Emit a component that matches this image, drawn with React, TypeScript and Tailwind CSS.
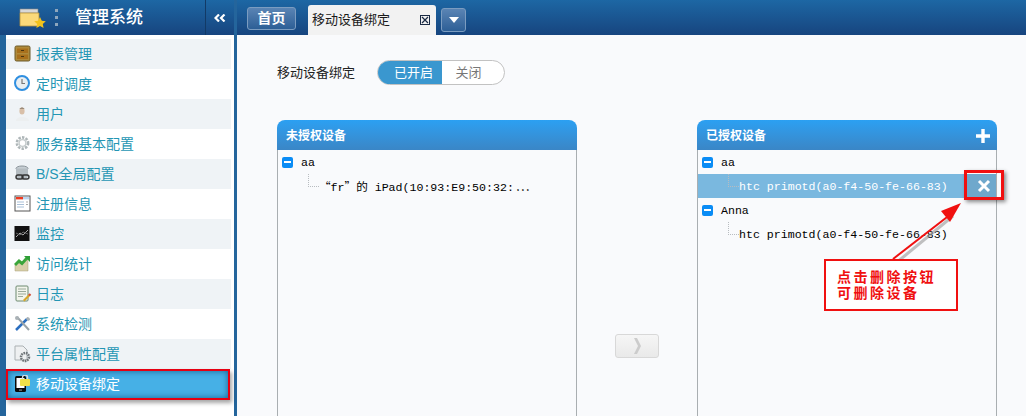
const cjk = "font-['Liberation_Sans','Noto_Sans_CJK_SC',sans-serif]";
const mono = "font-['Liberation_Mono','Noto_Sans_CJK_SC',monospace]";
const wide = "font-['Noto_Sans_CJK_SC',sans-serif]";

const Ic = ({ children }: { children: React.ReactNode }) => (
  <svg width="18" height="18" viewBox="0 0 18 18" className="shrink-0">{children}</svg>
);

const icons: React.ReactNode[] = [
  <Ic><rect x="1" y="1" width="15" height="15" rx="1.500" fill="#b08a3a" stroke="#6b5a2a" /><rect x="3" y="3.500" width="11" height="4.500" fill="#a8701c" /><rect x="3" y="9.500" width="11" height="4.500" fill="#a8701c" /><rect x="7" y="5" width="3" height="1" fill="#4a3510" /><rect x="7" y="11" width="3" height="1" fill="#4a3510" /></Ic>,
  <Ic><circle cx="8" cy="8" r="7" fill="#e8eef2" stroke="#2f8fe0" strokeWidth="2" /><path d="M8 4v4.500h3" stroke="#777" strokeWidth="1.200" fill="none" /></Ic>,
  <Ic><path d="M2 16c0-3 3-4 6-4s7 1 7 4z" fill="#eceff0" /><ellipse cx="8" cy="6" rx="2.600" ry="3.600" fill="#d8bfa8" /><path d="M5.500 4c1-2 4-2 5 0z" fill="#9a8a78" /></Ic>,
  <Ic><circle cx="8.500" cy="8" r="5.600" fill="none" stroke="#aeb6b8" strokeWidth="2.600" strokeDasharray="2.400 1.200" /><circle cx="8.500" cy="8" r="3.400" fill="none" stroke="#c5cbcc" strokeWidth="1.400" /></Ic>,
  <Ic><ellipse cx="8" cy="3.500" rx="6" ry="2.500" fill="#c6ced3" stroke="#8b949a" /><rect x="2" y="3.500" width="12" height="8" fill="#b4bcc1" /><ellipse cx="8" cy="11.500" rx="6" ry="2.500" fill="#b4bcc1" /><rect x="2" y="10" width="7" height="4" rx="2" fill="none" stroke="#333" strokeWidth="1.400" /><rect x="8" y="10" width="7" height="4" rx="2" fill="none" stroke="#333" strokeWidth="1.400" /></Ic>,
  <Ic><rect x="1" y="1" width="15" height="15" fill="#fff" stroke="#555" /><rect x="2" y="2" width="7" height="2.400" fill="#ee3a20" /><rect x="9" y="2" width="6" height="2.400" fill="#bcd4ee" /><path d="M3 7h7M3 9.500h7M3 12h7" stroke="#a9c0d8" /><path d="M12 7h2M12 9.500h2" stroke="#aaa" /></Ic>,
  <Ic><rect x="0.500" y="1" width="15" height="15" fill="#111" /><path d="M2 12l4-4 3 2 5-5" stroke="#aaa" strokeWidth="1" fill="none" /><path d="M2 8l4 2 3-3 5 2" stroke="#666" strokeWidth="1" fill="none" /></Ic>,
  <Ic><path d="M1 10l4-3 3 2 6-6v13H1z" fill="#d8cfa8" stroke="#a89f78" strokeWidth=".5" /><path d="M1 10l4-4 3 2.500 5-5.500" stroke="#3aa53a" strokeWidth="3" fill="none" /><path d="M10 1h6v6z" fill="#2f9e36" /></Ic>,
  <Ic><rect x="2" y="1" width="12" height="15" rx="1" fill="#f2f5ec" stroke="#6d8a70" /><path d="M4 4h8M4 6.500h8M4 9h8M4 11.500h5" stroke="#9aaa9a" /><path d="M9 15l6-6 1.500 1.500-6 6z" fill="#d8a72a" /><path d="M15 9l1.500 1.500" stroke="#d24a3a" strokeWidth="2" /></Ic>,
  <Ic><path d="M2 15l11-11" stroke="#2c6fc0" strokeWidth="2.500" /><path d="M13 2a3 3 0 0 1 3 3l-2 1-2-2z" fill="#aab2b6" /><path d="M3 2l12 13" stroke="#9aa3a8" strokeWidth="2" /><circle cx="3" cy="3" r="2" fill="#aab2b6" /></Ic>,
  <Ic><path d="M1 1h8l4 4v10H1z" fill="#eef0f1" stroke="#aab0b3" /><circle cx="11" cy="12" r="4" fill="none" stroke="#6e7478" strokeWidth="2.500" strokeDasharray="1.600 .8" /></Ic>,
  <Ic><rect x="1" y="1" width="11" height="16" rx="1.500" fill="#0b0b0b" /><rect x="2.500" y="3" width="8" height="10" fill="#fff" /><rect x="5" y="14.500" width="3" height="1.200" fill="#888" /><rect x="6" y="4" width="10" height="7" rx="1" fill="#efe04a" /><path d="M8.500 4V2.500a2.500 2.500 0 0 1 5 0V4" stroke="#d8dce0" strokeWidth="1.400" fill="none" /></Ic>,
];

const items = ["报表管理", "定时调度", "用户", "服务器基本配置", "B/S全局配置", "注册信息", "监控", "访问统计", "日志", "系统检测", "平台属性配置", "移动设备绑定"];

const Minus = () => (
  <span className="flex h-[11px] w-[11px] shrink-0 items-center justify-center rounded-[2px] bg-[#0a8cf5]">
    <span className="h-[2px] w-[7px] bg-white" />
  </span>
);

const Elbow = () => (
  <span className="mb-[11px] ml-[30px] h-[13px] w-[11px] shrink-0 self-end border-b border-l border-dotted border-[#b8bcc0]" />
);

const Header = ({ title, plus }: { title: string; plus?: boolean }) => (
  <div className="flex h-[30px] items-center justify-between rounded-t-[8px] bg-gradient-to-b from-[#2ba0f2] to-[#3a86c6] pl-[9px] pr-[6px] pt-[1px]">
    <span className={`${cjk} text-[12px] font-bold text-white`}>{title}</span>
    {plus && (
      <svg width="16" height="16" viewBox="0 0 16 16"><path d="M8 1v14M1 8h14" stroke="#fff" strokeWidth="3.400" /></svg>
    )}
  </div>
);

const Group = ({ name }: { name: string }) => (
  <div className="flex h-[24px] items-center pl-[4px]">
    <Minus />
    <span className={`${mono} ml-[8px] mt-[1px] text-[11.6px] text-black`}>{name}</span>
  </div>
);

export default function App() {
  return (
    <div className={`${cjk} relative flex h-[416px] w-[1026px] overflow-hidden bg-[#f9fafc]`}>
      <aside className="flex w-[237px] shrink-0 flex-col border-r-[3px] border-[#24659c] bg-white">
        <div className="flex h-[35px] items-center bg-gradient-to-b from-[#1d67a4] to-[#17457f]">
          <svg width="28" height="22" viewBox="0 0 28 22" className="ml-[19px] shrink-0">
            <path d="M1 2h18v4H1z" fill="#d8d8d8" stroke="#888" strokeWidth=".6" />
            <path d="M1 6h19v13H1z" fill="#fbd97a" stroke="#b89440" strokeWidth=".8" />
            <path d="M21 10l1.800 3.800 4 .5-3 2.800.8 4-3.600-2-3.600 2 .8-4-3-2.800 4-.5z" fill="#f2c21c" />
          </svg>
          <div className="ml-[8px] flex flex-col gap-[4px]">
            <span className="h-[3px] w-[3px] bg-[#8ea6bd]" />
            <span className="h-[3px] w-[3px] bg-[#8ea6bd]" />
            <span className="h-[3px] w-[3px] bg-[#8ea6bd]" />
          </div>
          <span className="ml-[17px] text-[17px] font-medium text-white">管理系统</span>
          <div className="ml-auto flex h-full w-[29px] items-center justify-center border-l border-[#123a66]">
            <svg width="12" height="8" viewBox="0 0 12 8"><path d="M5 .5L1.500 4 5 7.500M10.500 .5L7 4l3.500 3.500" stroke="#fff" strokeWidth="2.200" fill="none" /></svg>
          </div>
        </div>
        <div className="flex flex-1 flex-col border-l-[6px] border-[#24659c] pr-[3px] pt-[4px]">
          {items.map((t, i) => {
            const active = i === 11;
            return (
              <div
                key={t}
                className={`flex items-center ${active ? "mr-[1px] h-[31px] border-[2px] border-[#e60012] bg-[#46b0e6] pl-[6px] text-white shadow-[inset_0_0_6px_#17608f,2px_3px_4px_rgba(0,0,0,0.35)]" : i % 2 === 0 ? "h-[30px] bg-[#eff3f6] pl-[8px] pt-[1px] text-[#2496b4]" : "h-[30px] bg-white pl-[8px] pt-[1px] text-[#2496b4]"}`}
              >
                <span className="-mt-[2px] w-[22px]">{icons[i]}</span>
                <span className="text-[14px]">{t}</span>
              </div>
            );
          })}
        </div>
      </aside>

      <main className="flex min-w-0 flex-1 flex-col">
        <div className="flex h-[35px] items-end bg-gradient-to-b from-[#1d67a4] to-[#17457f] pl-[10px]">
          <div className="mb-[5px] flex h-[23px] w-[49px] items-center justify-center rounded-[3px] border border-[#7b9cc0] bg-gradient-to-b from-[#5a84b4] to-[#2d5f96] text-[14px] font-bold text-white">
            首页
          </div>
          <div className="ml-[12px] flex h-[30px] w-[128px] items-center rounded-t-[3px] bg-[#f2f2f2] pl-[4px] pr-[6px] text-[13px] text-[#1a1a1a]">
            移动设备绑定
            <span className="ml-auto flex h-[10px] w-[10px] items-center justify-center border border-[#1a2a44]">
              <svg width="8" height="8" viewBox="0 0 8 8"><path d="M1 1l6 6M7 1l-6 6" stroke="#1a2a44" strokeWidth="1.200" /></svg>
            </span>
          </div>
          <div className="mb-[3px] ml-[5px] flex h-[24px] w-[25px] items-center justify-center rounded-[3px] border border-[#7b9cc0] bg-gradient-to-b from-[#5a84b4] to-[#2d5f96]">
            <svg width="10" height="6" viewBox="0 0 10 6"><path d="M0 0h10L5 6z" fill="#fff" /></svg>
          </div>
        </div>

        <div className="flex h-[85px] items-start pl-[40px] pt-[25px]">
          <span className="mt-[3px] text-[13px] text-[#222]">移动设备绑定</span>
          <div className="ml-[22px] flex h-[25px] w-[128px] overflow-hidden rounded-full border border-[#c2c2c2] bg-white text-[13px]">
            <span className="-m-px flex w-[65px] items-center justify-center bg-[#3a97cf] pl-[8px] text-white">已开启</span>
            <span className="flex flex-1 items-center justify-center pr-[8px] text-[#777]">关闭</span>
          </div>
        </div>

        <div className="flex min-h-0 flex-1 pl-[40px]">
          <section className="flex h-[310px] w-[300px] shrink-0 flex-col">
            <Header title="未授权设备" />
            <div className="flex-1 border-x border-[#a9aeb1]">
              <Group name="aa" />
              <div className="flex h-[24px] items-center">
                <Elbow />
                <span className={`${mono} mt-[1px] text-[11.6px] text-black`}><span className={wide}>“</span>fr<span className={wide}>”</span>的 iPad(10:93:E9:50:32:<span className={`${wide} ml-[2px] text-[13px]`}>⋯</span></span>
              </div>
            </div>
          </section>

          <div className="flex w-[120px] shrink-0 justify-center pt-[214px]">
            <div className="flex h-[24px] w-[44px] items-center justify-center rounded-[3px] border border-[#d8d8d8] bg-gradient-to-b from-[#f6f6f6] to-[#e9e9e9]">
              <svg width="9" height="16" viewBox="0 0 9 16"><path d="M1 0h3l4 8-4 8H1l4-8z" fill="#cccccc" /></svg>
            </div>
          </div>

          <section className="flex h-[310px] w-[300px] shrink-0 flex-col">
            <Header title="已授权设备" plus />
            <div className="flex-1 border-x border-[#a9aeb1]">
              <Group name="aa" />
              <div className="flex h-[24px] items-center justify-between bg-[#7ab8df]">
                <div className="flex h-full items-center">
                  <Elbow />
                  <span className={`${mono} mt-[1px] text-[11.6px] text-white`}>htc primotd(a0-f4-50-fe-66-83)</span>
                </div>
                <div className="flex h-full w-[32px] items-center justify-center bg-[#6fa8cc] pl-[7px]">
                  <svg width="14" height="14" viewBox="0 0 14 14"><path d="M2 2l10 10M12 2L2 12" stroke="#fff" strokeWidth="3" /></svg>
                </div>
              </div>
              <Group name="Anna" />
              <div className="flex h-[24px] items-center">
                <Elbow />
                <span className={`${mono} mt-[1px] text-[11.6px] text-black`}>htc primotd(a0-f4-50-fe-66-83)</span>
              </div>
            </div>
          </section>
        </div>
      </main>

      <div className="absolute left-[964px] top-[170px] h-[30px] w-[40px] border-[3px] border-[#f01010] shadow-[2px_2px_4px_rgba(0,0,0,0.45)]" />
      <svg width="90" height="70" viewBox="0 0 90 70" className="absolute left-[885px] top-[198px]">
        <path d="M9 63L66 16" stroke="#999" strokeWidth="3" opacity=".6" transform="translate(2 2)" />
        <path d="M8 61L66 16" stroke="#f01010" strokeWidth="2" />
        <path d="M76 5L65 24 56 13z" fill="#f01010" />
      </svg>
      <div className="absolute left-[824px] top-[259px] flex h-[52px] w-[134px] flex-col justify-center border-[2px] border-[#f01010] bg-white pl-[11px] text-[14px] font-bold leading-[16px] tracking-[2.5px] text-[#f01010]">
        <span>点击删除按钮</span>
        <span>可删除设备</span>
      </div>
    </div>
  );
}
